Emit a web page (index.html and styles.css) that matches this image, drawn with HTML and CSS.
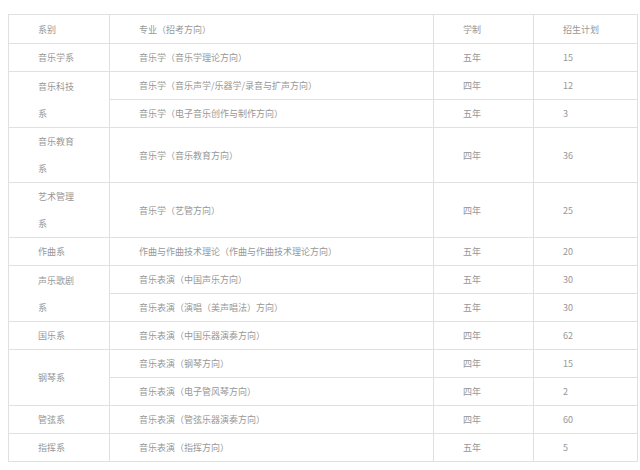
FILE: index.html
```html
<!DOCTYPE html>
<html lang="zh-CN">
<head>
<meta charset="utf-8">
<link rel="stylesheet" href="styles.css">
</head>
<body>
<div class="page">
<table class="plan">
<colgroup>
<col class="c-dept"><col class="c-major"><col class="c-years"><col class="c-num">
</colgroup>
<tbody>
<tr class="head"><td>系别</td><td>专业（招考方向）</td><td>学制</td><td>招生计划</td></tr>
<tr><td>音乐学系</td><td>音乐学（音乐学理论方向）</td><td>五年</td><td>15</td></tr>
<tr><td rowspan="2">音乐科技系</td><td>音乐学（音乐声学/乐器学/录音与扩声方向）</td><td>四年</td><td>12</td></tr>
<tr><td>音乐学（电子音乐创作与制作方向）</td><td>五年</td><td>3</td></tr>
<tr><td>音乐教育系</td><td>音乐学（音乐教育方向）</td><td>四年</td><td>36</td></tr>
<tr><td>艺术管理系</td><td>音乐学（艺管方向）</td><td>四年</td><td>25</td></tr>
<tr><td>作曲系</td><td>作曲与作曲技术理论（作曲与作曲技术理论方向）</td><td>五年</td><td>20</td></tr>
<tr><td rowspan="2">声乐歌剧系</td><td>音乐表演（中国声乐方向）</td><td>五年</td><td>30</td></tr>
<tr><td>音乐表演（演唱（美声唱法）方向）</td><td>五年</td><td>30</td></tr>
<tr><td>国乐系</td><td>音乐表演（中国乐器演奏方向）</td><td>四年</td><td>62</td></tr>
<tr><td rowspan="2">钢琴系</td><td>音乐表演（钢琴方向）</td><td>四年</td><td>15</td></tr>
<tr><td>音乐表演（电子管风琴方向）</td><td>四年</td><td>2</td></tr>
<tr><td>管弦系</td><td>音乐表演（管弦乐器演奏方向）</td><td>四年</td><td>60</td></tr>
<tr><td>指挥系</td><td>音乐表演（指挥方向）</td><td>五年</td><td>5</td></tr>
</tbody>
</table>
</div>
</body>
</html>
```

FILE: styles.css
```css
html, body {
  margin: 0;
  padding: 0;
  background: #ffffff;
}
.page {
  padding: 14px 0 0 8px;
}
.plan {
  border-collapse: collapse;
  table-layout: fixed;
  width: 629px;
  font-family: "Noto Sans CJK SC", "Noto Sans", sans-serif;
  font-size: 9px;
  font-weight: 400;
  color: #979797;
}
.c-dept { width: 101px; }
.c-major { width: 324px; }
.c-years { width: 100px; }
.c-num { width: 104px; }
.plan td {
  border: 1px solid #e0e0e0;
  padding: 0 28px 0 29px;
  line-height: 27px;
  height: 27px;
  vertical-align: middle;
  text-align: left;
  word-break: break-all;
}
.plan .head td {
  height: 28px;
}
```
